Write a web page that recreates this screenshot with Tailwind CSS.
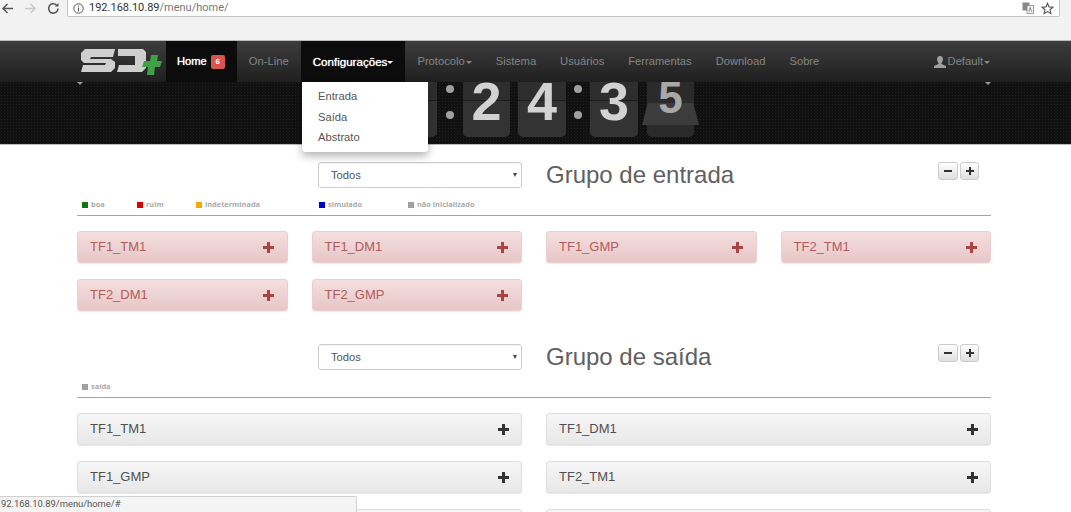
<!DOCTYPE html>
<html lang="pt">
<head>
    <meta charset="UTF-8">
    <title>SD+ Home</title>
    <script src="https://cdn.jsdelivr.net/npm/@tailwindcss/browser@4"></script>
</head>
<body class="relative h-[512px] overflow-hidden bg-white font-['Liberation_Sans',sans-serif] text-[#555]">

    <!-- browser toolbar -->
    <div class="flex h-[41px] items-start bg-[#f2f2f2] border-b border-[#bbb]">
        <div class="flex h-[17px] w-[67px] items-center pl-[1px] gap-[10px]">
            <svg class="w-[13px] h-[13px]" viewBox="0 0 13 13" fill="none" stroke="#555" stroke-width="1.5"><path d="M12 6.5H2M6.5 2L2 6.5L6.5 11"/></svg>
            <svg class="w-[13px] h-[13px]" viewBox="0 0 13 13" fill="none" stroke="#c8c8c8" stroke-width="1.5"><path d="M1 6.5H11M6.5 2L11 6.5L6.5 11"/></svg>
            <svg class="w-[13px] h-[13px]" viewBox="0 0 13 13" fill="none" stroke="#555" stroke-width="1.5"><path d="M11 6.5A4.7 4.7 0 1 1 9.6 3.1"/><path d="M11.5 1V4.6H7.9" fill="#555" stroke="none"/></svg>
        </div>
        <div class="flex h-[17px] w-[993px] items-center rounded-b-[2px] border border-t-0 border-[#c4c4c4] bg-white pl-[5px] pr-[4px] text-[11px] font-['Roboto',sans-serif] text-[#777]">
            <svg class="w-[11px] h-[11px] mr-[5px]" viewBox="0 0 11 11" fill="none" stroke="#555"><circle cx="5.5" cy="5.5" r="4.7"/><path d="M5.5 4.6V8.4M5.5 2.6V3.6"/></svg>
            <span><span class="text-[#333]">192.168.10.89</span>/menu/home/</span>
            <svg class="ml-auto w-[12px] h-[12px]" viewBox="0 0 12 12"><rect x="0.5" y="0.5" width="7" height="8" fill="#888"/><rect x="5" y="3.5" width="6.5" height="8" fill="#eee" stroke="#888" stroke-width="0.8"/><path d="M7 9.5L8.2 5.5L9.5 9.500" fill="none" stroke="#777" stroke-width="0.8"/></svg>
            <svg class="ml-[7px] mr-[1px] w-[13px] h-[13px]" viewBox="0 0 13 13" fill="none" stroke="#555" stroke-width="1.1"><path d="M6.5 1.2L8 4.9L12 5.2L9 7.8L9.900 11.7L6.5 9.6L3.100 11.7L4 7.8L1 5.2L5 4.9Z"/></svg>
        </div>
    </div>

    <!-- navbar -->
    <nav class="relative z-20 flex h-[41px] items-stretch bg-gradient-to-b from-[#3d3d3d] to-[#202020] pl-[81px] pr-[81px] text-[11.2px] text-[#858585]">
        <svg class="mt-[7px] mr-[4px] h-[27px] w-[81px]" viewBox="0 0 81 27">
            <path d="M4 1H34L32 9H10L9 11H30L34 14V20L30 24H0L2 17H24L25 15H3L0 12V5Z" fill="#cfcfcf"/>
            <path d="M37 1H62L65 4V20L61 24H36L38 17H54V8H37Z" fill="#cfcfcf"/>
            <path d="M70 7H77L76 13H81L79 19H74L73 27H66L67 19H61L63 13H69Z" fill="#3fa046"/>
        </svg>
        <a class="flex items-center bg-[#0c0c0c] pl-[11px] pr-[12px] text-white [text-shadow:0_0_1px_#fff]">Home<span class="ml-[4px] flex h-[14px] w-[14px] items-center justify-center rounded-[2px] bg-[#d9534f] text-[8px] font-bold [text-shadow:none]">6</span></a>
        <a class="flex items-center px-[12px]">On-Line</a>
        <a class="flex items-center bg-[#0c0c0c] px-[12px] text-[11.6px] text-white [text-shadow:0_0_1px_#fff]">Configurações<span class="mt-[1px] border-x-[3px] border-t-[3px] border-x-transparent border-t-white"></span></a>
        <a class="flex items-center px-[12px]">Protocolo<span class="ml-[1px] mt-[1px] border-x-[3px] border-t-[3px] border-x-transparent border-t-[#858585]"></span></a>
        <a class="flex items-center px-[12px]">Sistema</a>
        <a class="flex items-center px-[12px]">Usuários</a>
        <a class="flex items-center px-[12px]">Ferramentas</a>
        <a class="flex items-center px-[12px]">Download</a>
        <a class="flex items-center px-[12px]">Sobre</a>
        <a class="ml-auto flex items-center">
            <svg class="mr-[2px] h-[12px] w-[12px]" viewBox="0 0 12 12" fill="#a0a0a0"><path d="M6 0C8 0 9 1.400 9 3.200C9 5 8 6.300 7.500 7V8L12 10V12H0V10L4.500 8V7C4 6.300 3 5 3 3.200C3 1.400 4 0 6 0Z"/></svg>
            Default<span class="ml-[1px] mt-[1px] border-x-[3px] border-t-[3px] border-x-transparent border-t-[#858585]"></span>
        </a>

        <!-- open dropdown -->
        <div class="absolute left-[302px] top-[41px] flex h-[70px] w-[126px] flex-col rounded-b-[3px] bg-white py-[4px] pl-[16px] text-[11.2px] text-[#555] shadow-[0_4px_8px_rgba(0,0,0,0.3)]">
            <a class="flex h-[21px] items-center">Entrada</a>
            <a class="flex h-[21px] items-center">Saída</a>
            <a class="flex h-[21px] items-center">Abstrato</a>
        </div>
    </nav>

    <!-- flip clock band -->
    <div class="relative flex h-[63px] items-start border-b border-[#bbb] bg-[#111] bg-[radial-gradient(circle,#212121_1px,#111111_1px)] bg-[length:3px_3px] pl-[334px] font-bold text-[#d2d2d2]">
        <span class="absolute left-[77px] top-[0px] border-x-[3px] border-t-[3px] border-x-transparent border-t-[#999]"></span>
        <span class="absolute left-[985px] top-[0px] border-x-[3px] border-t-[3px] border-x-transparent border-t-[#999]"></span>

        <div class="h-[55px] w-[47px] rounded-b-[5px] bg-[linear-gradient(#2e2e2e_0,#2e2e2e_18px,#1c1c1c_18px,#1c1c1c_19px,#333_19px)]"></div>
        <div class="ml-[9px] h-[55px] w-[47px] rounded-b-[5px] bg-[linear-gradient(#2e2e2e_0,#2e2e2e_18px,#1c1c1c_18px,#1c1c1c_19px,#333_19px)]"></div>
        <div class="flex h-[55px] w-[26px] flex-col items-center gap-[18px] pt-[3px]">
            <span class="h-[8px] w-[8px] rounded-full bg-[#a0a0a0]"></span>
            <span class="h-[8px] w-[8px] rounded-full bg-[#a0a0a0]"></span>
        </div>
        <div class="flex h-[55px] w-[47px] items-start justify-center rounded-b-[5px] bg-[linear-gradient(#2e2e2e_0,#2e2e2e_18px,#1c1c1c_18px,#1c1c1c_19px,#333_19px)] text-[54px] leading-[38px]">2</div>
        <div class="ml-[8px] flex h-[55px] w-[48px] items-start justify-center rounded-b-[5px] bg-[linear-gradient(#2e2e2e_0,#2e2e2e_18px,#1c1c1c_18px,#1c1c1c_19px,#333_19px)] text-[54px] leading-[38px]">4</div>
        <div class="flex h-[55px] w-[24px] flex-col items-center gap-[18px] pt-[3px]">
            <span class="h-[8px] w-[8px] rounded-full bg-[#a0a0a0]"></span>
            <span class="h-[8px] w-[8px] rounded-full bg-[#a0a0a0]"></span>
        </div>
        <div class="flex h-[55px] w-[48px] items-start justify-center rounded-b-[5px] bg-[linear-gradient(#2e2e2e_0,#2e2e2e_18px,#1c1c1c_18px,#1c1c1c_19px,#333_19px)] text-[54px] leading-[38px]">3</div>
        <div class="relative ml-[9px] flex h-[55px] w-[47px] items-start justify-center rounded-b-[5px] bg-[#2b2b2b] text-[44px] leading-[32px] text-[#a8a8a8]">
            <span class="absolute -left-[5px] top-[21px] h-[22px] w-[57px] bg-[#3c3c3c] [clip-path:polygon(10%_0,90%_0,100%_100%,0_100%)]"></span>
            <span class="relative">5</span>
        </div>
    </div>

    <main class="pl-[77px] pr-[80px]">
        <!-- grupo de entrada -->
        <section class="mt-[17px]">
            <div class="flex h-[26px] items-center">
                <div class="relative ml-[241px] w-[204px]">
                    <select class="h-[26px] w-full appearance-none rounded-[3px] border border-[#ccc] bg-white pl-[12px] text-[11.2px] text-[#555] shadow-[inset_0_1px_1px_rgba(0,0,0,0.05)]"><option>Todos</option></select>
                    <span class="absolute right-[5px] top-[11px] border-x-[2.5px] border-t-[4px] border-x-transparent border-t-[#444]"></span>
                </div>
                <h2 class="ml-[24px] text-[24px] text-[#606060]">Grupo de entrada</h2>
                <div class="ml-auto mr-[12px] flex gap-[2px] self-start">
                    <button class="flex h-[18px] w-[20px] items-center justify-center rounded-[3px] border border-[#ccc] bg-gradient-to-b from-white to-[#dedede]"><svg class="h-[8px] w-[8px]" viewBox="0 0 8 8" fill="#333"><rect y="3" width="8" height="2"/></svg></button>
                    <button class="flex h-[18px] w-[19px] items-center justify-center rounded-[3px] border border-[#ccc] bg-gradient-to-b from-white to-[#dedede]"><svg class="h-[8px] w-[8px]" viewBox="0 0 8 8" fill="#333"><path d="M3 0H5V3H8V5H5V8H3V5H0V3H3Z"/></svg></button>
                </div>
            </div>
            <div class="mt-[12px] flex h-[10px] items-center pl-[5px] font-['Open_Sans',sans-serif] text-[7.4px] font-bold text-[#aaa]">
                <span class="flex w-[55px] items-center gap-[3px]"><i class="h-[6px] w-[6px] bg-[#0a7a0a]"></i>boa</span>
                <span class="flex w-[59px] items-center gap-[3px]"><i class="h-[6px] w-[6px] bg-[#e00000]"></i>ruim</span>
                <span class="flex w-[123px] items-center gap-[3px]"><i class="h-[6px] w-[6px] bg-[#f5a800]"></i>indeterminada</span>
                <span class="flex w-[89px] items-center gap-[3px]"><i class="h-[6px] w-[6px] bg-[#0000d0]"></i>simulado</span>
                <span class="flex items-center gap-[3px]"><i class="h-[6px] w-[6px] bg-[#a0a0a0]"></i>não inicializado</span>
            </div>
            <div class="mt-[5px] h-[1px] bg-[#80b0d0]"></div>
            <div class="mt-[15px] grid grid-cols-4 gap-x-[24px] gap-y-[16px] text-[13px] text-[#b25c5c]">
                <div class="flex h-[32px] items-center justify-between rounded-[3px] border border-[#ebcfd0] bg-gradient-to-b from-[#f3dfdf] to-[#e8c6c7] pl-[12px] pr-[13px] shadow-[0_1px_1px_rgba(0,0,0,0.08)]">TF1_TM1<svg class="h-[11px] w-[11px]" viewBox="0 0 11 11" fill="#a94442"><path d="M4 0H7V4H11V7H7V11H4V7H0V4H4Z"/></svg></div>
                <div class="flex h-[32px] items-center justify-between rounded-[3px] border border-[#ebcfd0] bg-gradient-to-b from-[#f3dfdf] to-[#e8c6c7] pl-[12px] pr-[13px] shadow-[0_1px_1px_rgba(0,0,0,0.08)]">TF1_DM1<svg class="h-[11px] w-[11px]" viewBox="0 0 11 11" fill="#a94442"><path d="M4 0H7V4H11V7H7V11H4V7H0V4H4Z"/></svg></div>
                <div class="flex h-[32px] items-center justify-between rounded-[3px] border border-[#ebcfd0] bg-gradient-to-b from-[#f3dfdf] to-[#e8c6c7] pl-[12px] pr-[13px] shadow-[0_1px_1px_rgba(0,0,0,0.08)]">TF1_GMP<svg class="h-[11px] w-[11px]" viewBox="0 0 11 11" fill="#a94442"><path d="M4 0H7V4H11V7H7V11H4V7H0V4H4Z"/></svg></div>
                <div class="flex h-[32px] items-center justify-between rounded-[3px] border border-[#ebcfd0] bg-gradient-to-b from-[#f3dfdf] to-[#e8c6c7] pl-[12px] pr-[13px] shadow-[0_1px_1px_rgba(0,0,0,0.08)]">TF2_TM1<svg class="h-[11px] w-[11px]" viewBox="0 0 11 11" fill="#a94442"><path d="M4 0H7V4H11V7H7V11H4V7H0V4H4Z"/></svg></div>
                <div class="flex h-[32px] items-center justify-between rounded-[3px] border border-[#ebcfd0] bg-gradient-to-b from-[#f3dfdf] to-[#e8c6c7] pl-[12px] pr-[13px] shadow-[0_1px_1px_rgba(0,0,0,0.08)]">TF2_DM1<svg class="h-[11px] w-[11px]" viewBox="0 0 11 11" fill="#a94442"><path d="M4 0H7V4H11V7H7V11H4V7H0V4H4Z"/></svg></div>
                <div class="flex h-[32px] items-center justify-between rounded-[3px] border border-[#ebcfd0] bg-gradient-to-b from-[#f3dfdf] to-[#e8c6c7] pl-[12px] pr-[13px] shadow-[0_1px_1px_rgba(0,0,0,0.08)]">TF2_GMP<svg class="h-[11px] w-[11px]" viewBox="0 0 11 11" fill="#a94442"><path d="M4 0H7V4H11V7H7V11H4V7H0V4H4Z"/></svg></div>
            </div>
        </section>

        <!-- grupo de saida -->
        <section class="mt-[33px]">
            <div class="flex h-[26px] items-center">
                <div class="relative ml-[241px] w-[204px]">
                    <select class="h-[26px] w-full appearance-none rounded-[3px] border border-[#ccc] bg-white pl-[12px] text-[11.2px] text-[#555] shadow-[inset_0_1px_1px_rgba(0,0,0,0.05)]"><option>Todos</option></select>
                    <span class="absolute right-[5px] top-[11px] border-x-[2.5px] border-t-[4px] border-x-transparent border-t-[#444]"></span>
                </div>
                <h2 class="ml-[24px] text-[24px] text-[#606060]">Grupo de saída</h2>
                <div class="ml-auto mr-[12px] flex gap-[2px] self-start">
                    <button class="flex h-[18px] w-[20px] items-center justify-center rounded-[3px] border border-[#ccc] bg-gradient-to-b from-white to-[#dedede]"><svg class="h-[8px] w-[8px]" viewBox="0 0 8 8" fill="#333"><rect y="3" width="8" height="2"/></svg></button>
                    <button class="flex h-[18px] w-[19px] items-center justify-center rounded-[3px] border border-[#ccc] bg-gradient-to-b from-white to-[#dedede]"><svg class="h-[8px] w-[8px]" viewBox="0 0 8 8" fill="#333"><path d="M3 0H5V3H8V5H5V8H3V5H0V3H3Z"/></svg></button>
                </div>
            </div>
            <div class="mt-[12px] flex h-[10px] items-center pl-[5px] font-['Open_Sans',sans-serif] text-[7.4px] font-bold text-[#aaa]">
                <span class="flex items-center gap-[3px]"><i class="h-[6px] w-[6px] bg-[#a0a0a0]"></i>saída</span>
            </div>
            <div class="mt-[5px] h-[1px] bg-[#80b0d0]"></div>
            <div class="mt-[15px] grid grid-cols-2 gap-x-[24px] gap-y-[16px] text-[13px] text-[#505050]">
                <div class="flex h-[32px] items-center justify-between rounded-[3px] border border-[#e0e0e0] bg-gradient-to-b from-[#f5f5f5] to-[#e8e8e8] px-[12px] shadow-[0_1px_1px_rgba(0,0,0,0.1)]">TF1_TM1<svg class="h-[11px] w-[11px]" viewBox="0 0 11 11" fill="#333"><path d="M4 0H7V4H11V7H7V11H4V7H0V4H4Z"/></svg></div>
                <div class="flex h-[32px] items-center justify-between rounded-[3px] border border-[#e0e0e0] bg-gradient-to-b from-[#f5f5f5] to-[#e8e8e8] px-[12px] shadow-[0_1px_1px_rgba(0,0,0,0.1)]">TF1_DM1<svg class="h-[11px] w-[11px]" viewBox="0 0 11 11" fill="#333"><path d="M4 0H7V4H11V7H7V11H4V7H0V4H4Z"/></svg></div>
                <div class="flex h-[32px] items-center justify-between rounded-[3px] border border-[#e0e0e0] bg-gradient-to-b from-[#f5f5f5] to-[#e8e8e8] px-[12px] shadow-[0_1px_1px_rgba(0,0,0,0.1)]">TF1_GMP<svg class="h-[11px] w-[11px]" viewBox="0 0 11 11" fill="#333"><path d="M4 0H7V4H11V7H7V11H4V7H0V4H4Z"/></svg></div>
                <div class="flex h-[32px] items-center justify-between rounded-[3px] border border-[#e0e0e0] bg-gradient-to-b from-[#f5f5f5] to-[#e8e8e8] px-[12px] shadow-[0_1px_1px_rgba(0,0,0,0.1)]">TF2_TM1<svg class="h-[11px] w-[11px]" viewBox="0 0 11 11" fill="#333"><path d="M4 0H7V4H11V7H7V11H4V7H0V4H4Z"/></svg></div>
                <div class="h-[32px] rounded-[3px] border border-[#e0e0e0] bg-[#f5f5f5]"></div>
                <div class="h-[32px] rounded-[3px] border border-[#e0e0e0] bg-[#f5f5f5]"></div>
            </div>
        </section>
    </main>

    <!-- browser status bubble -->
    <div class="absolute bottom-0 left-0 flex h-[16px] w-[357px] items-center rounded-tr-[2px] border-t border-r border-[#d0d0d0] bg-[#f4f4f4] pl-[1px] font-['Roboto',sans-serif] text-[9.4px] text-[#555]">92.168.10.89/menu/home/#</div>
</body>
</html>
